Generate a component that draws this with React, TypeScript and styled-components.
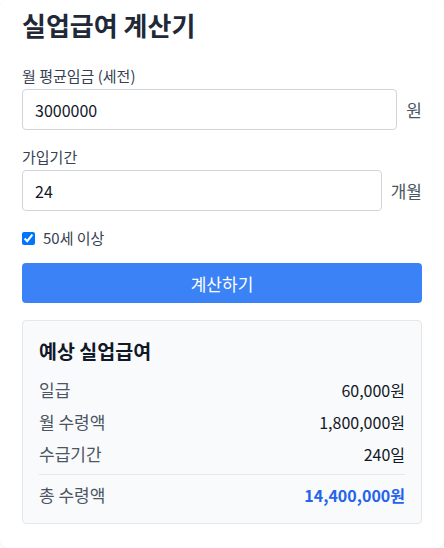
import React, { useState } from "react";
import styled, { createGlobalStyle } from "styled-components";

const GlobalStyle = createGlobalStyle`
  * {
    box-sizing: border-box;
  }
  body {
    margin: 0;
    background: #ffffff;
    font-family: "Noto Sans CJK KR", "Noto Sans", sans-serif;
    color: #111827;
  }
`;

const Card = styled.div`
  width: 100%;
  padding: 9px 22px 24px;
  background: #ffffff;
  border-radius: 8px;
  box-shadow: 0 1px 3px rgba(0, 0, 0, 0.08);
`;

const Title = styled.h1`
  margin: 0 0 25px;
  font-size: 26px;
  line-height: 32px;
  font-weight: 700;
  color: #1f2937;
`;

const Field = styled.div`
  margin-bottom: 17px;
`;

const Label = styled.label`
  display: block;
  margin-bottom: 3px;
  font-size: 15px;
  line-height: 20px;
  color: #374151;
`;

const InputRow = styled.div`
  display: flex;
  align-items: center;
  gap: 9px;
`;

const Input = styled.input`
  flex: 1;
  min-width: 0;
  height: 41px;
  padding: 0 12px;
  border: 1px solid #d1d5db;
  border-radius: 4px;
  font-family: inherit;
  font-size: 16px;
  color: #111827;
  outline: none;
`;

const Suffix = styled.span`
  font-size: 17px;
  color: #4b5563;
`;

const CheckRow = styled.label`
  display: flex;
  align-items: center;
  gap: 8px;
  margin-bottom: 15px;
  font-size: 15px;
  line-height: 20px;
  color: #374151;

  input {
    width: 13px;
    height: 13px;
    margin: 0;
  }
`;

const Button = styled.button`
  display: block;
  width: 100%;
  height: 40px;
  border: none;
  border-radius: 4px;
  background: #3b82f6;
  color: #ffffff;
  font-family: inherit;
  font-size: 17px;
  cursor: pointer;
`;

const Result = styled.div`
  margin-top: 17px;
  padding: 16px;
  background: #f9fafb;
  border: 1px solid #e5e7eb;
  border-radius: 4px;
`;

const ResultTitle = styled.h2`
  margin: 0 0 13px;
  font-size: 19.5px;
  line-height: 28px;
  font-weight: 700;
  color: #111827;
`;

const Row = styled.div<{ $total?: boolean }>`
  display: flex;
  justify-content: space-between;
  align-items: center;
  font-size: 16px;
  line-height: 24px;
  margin-top: 8px;
  padding-top: ${(p) => (p.$total ? "8px" : "0")};
  border-top: ${(p) => (p.$total ? "1px solid #e5e7eb" : "none")};

  &:first-of-type {
    margin-top: 0;
  }
`;

const RowLabel = styled.span`
  font-size: 17px;
  color: #4b5563;
`;

const RowValue = styled.span<{ $accent?: boolean }>`
  color: ${(p) => (p.$accent ? "#2563eb" : "#111827")};
  font-weight: ${(p) => (p.$accent ? 700 : 400)};
`;

const fmt = (n: number) => n.toLocaleString("ko-KR");

export default function App() {
  const [wage, setWage] = useState("3000000");
  const [months, setMonths] = useState("24");
  const [over50, setOver50] = useState(true);

  const daily = 60000;
  const monthly = 1800000;
  const days = 240;
  const total = 14400000;

  return (
    <>
      <GlobalStyle />
      <Card>
        <Title>실업급여 계산기</Title>
        <Field>
          <Label>월 평균임금 (세전)</Label>
          <InputRow>
            <Input value={wage} onChange={(e) => setWage(e.target.value)} />
            <Suffix>원</Suffix>
          </InputRow>
        </Field>
        <Field>
          <Label>가입기간</Label>
          <InputRow>
            <Input value={months} onChange={(e) => setMonths(e.target.value)} />
            <Suffix>개월</Suffix>
          </InputRow>
        </Field>
        <CheckRow>
          <input
            type="checkbox"
            checked={over50}
            onChange={(e) => setOver50(e.target.checked)}
          />
          50세 이상
        </CheckRow>
        <Button>계산하기</Button>
        <Result>
          <ResultTitle>예상 실업급여</ResultTitle>
          <Row>
            <RowLabel>일급</RowLabel>
            <RowValue>{fmt(daily)}원</RowValue>
          </Row>
          <Row>
            <RowLabel>월 수령액</RowLabel>
            <RowValue>{fmt(monthly)}원</RowValue>
          </Row>
          <Row>
            <RowLabel>수급기간</RowLabel>
            <RowValue>{days}일</RowValue>
          </Row>
          <Row $total>
            <RowLabel>총 수령액</RowLabel>
            <RowValue $accent>{fmt(total)}원</RowValue>
          </Row>
        </Result>
      </Card>
    </>
  );
}
